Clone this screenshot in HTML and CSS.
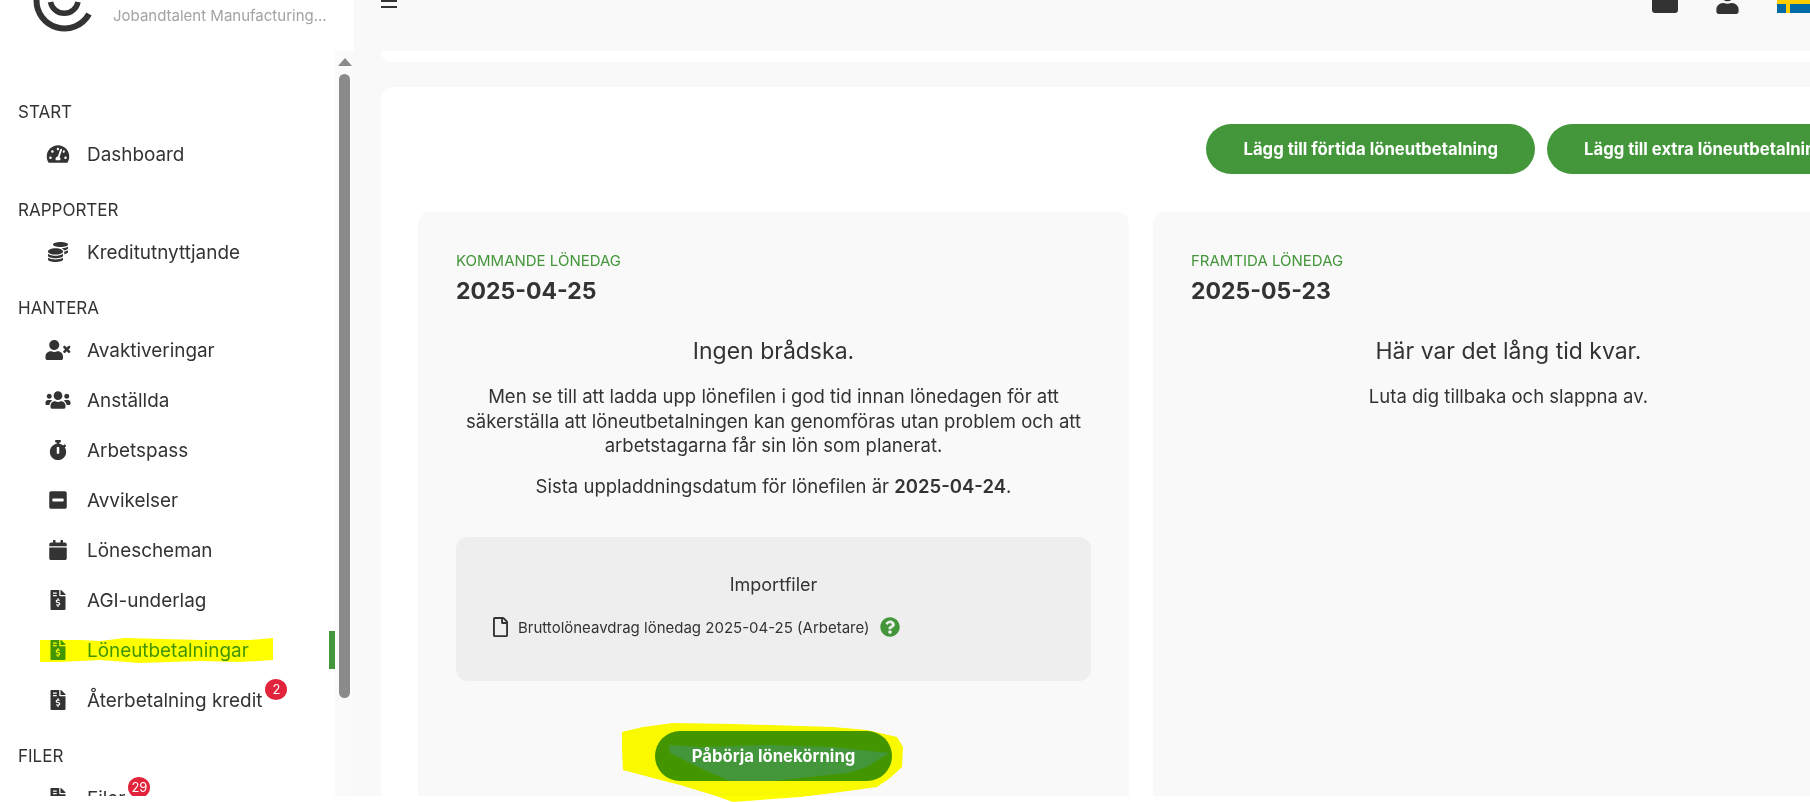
FILE: index.html
```html
<!DOCTYPE html>
<html lang="sv">
<head>
  <meta charset="UTF-8" />
  <meta name="viewport" content="width=device-width, initial-scale=1.0"/>
  <title>Löneutbetalningar</title>
  <link rel="stylesheet" href="styles.css">
</head>
<body>

  <svg class="sprite" xmlns="http://www.w3.org/2000/svg">
    <symbol id="i-gauge" viewBox="0 0 576 512"><path d="M288 32C128.94 32 0 160.94 0 320c0 52.8 14.25 102.26 39.06 144.8 5.61 9.62 16.3 15.2 27.44 15.2h443c11.14 0 21.83-5.58 27.44-15.2C561.75 422.26 576 372.8 576 320c0-159.06-128.94-288-288-288zm0 64c14.71 0 26.58 10.13 30.32 23.65-1.11 2.26-2.64 4.23-3.45 6.67l-9.22 27.67c-5.13 3.49-10.97 6.01-17.64 6.01-17.67 0-32-14.33-32-32S270.33 96 288 96zM96 384c-17.67 0-32-14.33-32-32s14.33-32 32-32 32 14.33 32 32-14.33 32-32 32zm48-160c-17.67 0-32-14.33-32-32s14.33-32 32-32 32 14.33 32 32-14.33 32-32 32zm246.77-72.41l-61.33 184C343.13 347.33 352 364.54 352 384c0 11.72-3.38 22.55-8.88 32H232.88c-5.5-9.45-8.88-20.28-8.88-32 0-33.94 26.5-61.43 59.9-63.59l61.34-184.01c4.17-12.56 17.73-19.45 30.36-15.17 12.57 4.19 19.35 17.77 15.17 30.36zm14.66 57.2l15.52-46.55c3.47-1.29 7.13-2.23 11.05-2.23 17.67 0 32 14.33 32 32s-14.33 32-32 32c-11.38-.01-20.89-6.28-26.57-15.22zM480 384c-17.67 0-32-14.33-32-32s14.33-32 32-32 32 14.33 32 32-14.33 32-32 32z"/></symbol>
    <symbol id="i-coins" viewBox="0 0 512 512"><path d="M0 405.3V448c0 35.3 86 64 192 64s192-28.7 192-64v-42.7C342.7 434.4 267.2 448 192 448S41.3 434.4 0 405.3zM320 128c106 0 192-28.7 192-64S426 0 320 0 128 28.7 128 64s86 64 192 64zM0 300.4V352c0 35.3 86 64 192 64s192-28.7 192-64v-51.6c-41.3 34-116.9 51.6-192 51.6S41.3 334.4 0 300.4zm416 11c57.3-11.1 96-31.7 96-55.4v-42.7c-23.2 16.4-57.3 27.6-96 34.5v63.6zM192 160C86 160 0 195.8 0 240s86 80 192 80 192-35.8 192-80-86-80-192-80zm219.3 56.3c60-10.8 100.7-32 100.7-56.3v-42.7c-35.5 25.1-96.5 38.6-160.7 41.8 29.5 14.3 51.2 33.5 60 57.2z"/></symbol>
    <symbol id="i-user-times" viewBox="0 0 640 512"><path d="M589.6 240l45.6-45.6c6.3-6.3 6.3-16.5 0-22.8l-22.8-22.8c-6.3-6.3-16.5-6.3-22.8 0L544 194.4l-45.6-45.6c-6.3-6.3-16.5-6.3-22.8 0l-22.8 22.8c-6.3 6.3-6.3 16.5 0 22.8l45.6 45.6-45.6 45.6c-6.3 6.3-6.3 16.5 0 22.8l22.8 22.8c6.3 6.3 16.5 6.3 22.8 0l45.6-45.6 45.6 45.6c6.3 6.3 16.5 6.3 22.8 0l22.8-22.8c6.3-6.3 6.3-16.5 0-22.8L589.6 240zM224 256c70.7 0 128-57.3 128-128S294.7 0 224 0 96 57.3 96 128s57.3 128 128 128zm89.6 32h-16.7c-22.2 10.2-46.9 16-72.9 16s-50.6-5.8-72.9-16h-16.7C60.2 288 0 348.2 0 422.4V464c0 26.5 21.5 48 48 48h352c26.5 0 48-21.5 48-48v-41.6c0-74.2-60.2-134.4-134.4-134.4z"/></symbol>
    <symbol id="i-users" viewBox="0 0 640 512"><path d="M96 224c35.3 0 64-28.7 64-64s-28.7-64-64-64-64 28.7-64 64 28.7 64 64 64zm448 0c35.3 0 64-28.7 64-64s-28.7-64-64-64-64 28.7-64 64 28.7 64 64 64zm32 32h-64c-17.6 0-33.5 7.1-45.1 18.6 40.3 22.1 68.9 62 75.1 109.4h66c17.7 0 32-14.3 32-32v-32c0-35.3-28.7-64-64-64zm-256 0c61.9 0 112-50.1 112-112S381.9 32 320 32 208 82.1 208 144s50.1 112 112 112zm76.8 32h-8.3c-20.8 10-43.9 16-68.5 16s-47.6-6-68.5-16h-8.3C179.6 288 128 339.6 128 403.2V432c0 26.5 21.5 48 48 48h288c26.5 0 48-21.5 48-48v-28.8c0-63.6-51.6-115.2-115.2-115.2zm-223.7-13.4C161.5 263.1 145.6 256 128 256H64c-35.3 0-64 28.7-64 64v32c0 17.7 14.3 32 32 32h65.9c6.3-47.4 34.9-87.3 75.2-109.4z"/></symbol>
    <symbol id="i-stopwatch" viewBox="0 0 448 512"><path d="M432 304c0 114.9-93.1 208-208 208S16 418.9 16 304c0-104 76.3-190.2 176-205.5V64h-28c-6.6 0-12-5.4-12-12V12c0-6.6 5.4-12 12-12h120c6.6 0 12 5.4 12 12v40c0 6.6-5.4 12-12 12h-28v34.5c37.5 5.8 71.7 21.6 99.7 44.6l27.5-27.5c4.7-4.7 12.3-4.7 17 0l28.3 28.3c4.7 4.7 4.7 12.3 0 17l-29.4 29.4-.6.6C419.7 223.3 432 262.2 432 304zm-176 36V188.5c0-6.6-5.4-12-12-12h-40c-6.6 0-12 5.4-12 12V340c0 6.6 5.4 12 12 12h40c6.6 0 12-5.4 12-12z"/></symbol>
    <symbol id="i-minus" viewBox="0 0 448 512"><path d="M400 32H48C21.5 32 0 53.5 0 80v352c0 26.5 21.5 48 48 48h352c26.5 0 48-21.5 48-48V80c0-26.5-21.5-48-48-48zM92 296c-6.6 0-12-5.4-12-12v-56c0-6.6 5.4-12 12-12h264c6.6 0 12 5.4 12 12v56c0 6.6-5.4 12-12 12H92z"/></symbol>
    <symbol id="i-calendar" viewBox="0 0 448 512"><path d="M12 192h424c6.6 0 12 5.4 12 12v260c0 26.5-21.5 48-48 48H48c-26.5 0-48-21.5-48-48V204c0-6.6 5.4-12 12-12zm436-44v-36c0-26.5-21.5-48-48-48h-48V12c0-6.6-5.4-12-12-12h-40c-6.6 0-12 5.4-12 12v52H160V12c0-6.6-5.4-12-12-12h-40c-6.6 0-12 5.4-12 12v52H48C21.5 64 0 85.5 0 112v36c0 6.6 5.4 12 12 12h424c6.6 0 12-5.4 12-12z"/></symbol>
    <symbol id="i-invoice" viewBox="0 0 384 512"><path d="M377 105L279.1 7c-4.5-4.5-10.6-7-17-7H256v128h128v-6.1c0-6.3-2.5-12.4-7-16.9zm-153 31V0H24C10.7 0 0 10.7 0 24v464c0 13.3 10.7 24 24 24h336c13.3 0 24-10.7 24-24V160H248c-13.2 0-24-10.8-24-24zM64 72c0-4.42 3.58-8 8-8h80c4.42 0 8 3.58 8 8v16c0 4.42-3.58 8-8 8H72c-4.42 0-8-3.58-8-8V72zm0 64c0-4.42 3.58-8 8-8h80c4.42 0 8 3.58 8 8v16c0 4.42-3.58 8-8 8H72c-4.42 0-8-3.58-8-8v-16zm144 263.88V424c0 4.42-3.58 8-8 8h-16c-4.42 0-8-3.58-8-8v-24.29c-11.29-.58-22.27-4.52-31.37-11.35-3.9-2.93-4.1-8.77-.57-12.14l11.75-11.21c2.77-2.64 6.89-2.76 10.13-.73 3.87 2.42 8.26 3.72 12.82 3.72h28.11c6.5 0 11.8-5.92 11.8-13.19 0-5.95-3.61-11.19-8.77-12.73l-45-13.5c-18.59-5.58-31.58-23.42-31.58-43.39 0-24.52 19.05-44.44 42.67-45.07V216c0-4.42 3.58-8 8-8h16c4.42 0 8 3.58 8 8v24.29c11.29.58 22.27 4.51 31.37 11.35 3.9 2.93 4.1 8.77.57 12.14l-11.75 11.21c-2.77 2.64-6.89 2.76-10.13.73-3.87-2.43-8.26-3.72-12.82-3.72h-28.11c-6.5 0-11.8 5.92-11.8 13.19 0 5.95 3.61 11.19 8.77 12.73l45 13.5c18.59 5.58 31.58 23.42 31.58 43.39 0 24.53-19.05 44.44-42.67 45.07z"/></symbol>
  </svg>

  <div class="app">

    <aside class="sidebar">
      <div class="brand">
        <svg class="brand-logo" viewBox="0 0 64 36" width="64" height="36">
          <path d="M3.5 0 A28 28 0 0 0 56 14" fill="none" stroke="#333" stroke-width="6"/>
          <path d="M17.5 2 A14 14 0 0 0 45 2" fill="none" stroke="#333" stroke-width="5.5"/>
        </svg>
        <span class="brand-name">Jobandtalent Manufacturing...</span>
      </div>

      <div class="sidebar-body">
        <nav class="nav">
          <div class="nav-label">START</div>
          <a class="nav-item"><svg class="nav-icon"><use href="#i-gauge"/></svg>Dashboard</a>

          <div class="nav-label">RAPPORTER</div>
          <a class="nav-item"><svg class="nav-icon"><use href="#i-coins"/></svg>Kreditutnyttjande</a>

          <div class="nav-label">HANTERA</div>
          <a class="nav-item"><svg class="nav-icon"><use href="#i-user-times"/></svg>Avaktiveringar</a>
          <a class="nav-item"><svg class="nav-icon"><use href="#i-users"/></svg>Anställda</a>
          <a class="nav-item"><svg class="nav-icon"><use href="#i-stopwatch"/></svg>Arbetspass</a>
          <a class="nav-item"><svg class="nav-icon"><use href="#i-minus"/></svg>Avvikelser</a>
          <a class="nav-item"><svg class="nav-icon"><use href="#i-calendar"/></svg>Lönescheman</a>
          <a class="nav-item"><svg class="nav-icon"><use href="#i-invoice"/></svg>AGI-underlag</a>
          <a class="nav-item active"><svg class="nav-icon"><use href="#i-invoice"/></svg>Löneutbetalningar</a>
          <a class="nav-item"><svg class="nav-icon"><use href="#i-invoice"/></svg><span class="badged">Återbetalning kredit<span class="badge">2</span></span></a>

          <div class="nav-label">FILER</div>
          <a class="nav-item"><svg class="nav-icon"><use href="#i-invoice"/></svg><span class="badged">Filer<span class="badge">29</span></span></a>
        </nav>

        <div class="scrollbar">
          <div class="scroll-arrow"></div>
          <div class="scroll-thumb"></div>
        </div>
      </div>
    </aside>

    <main class="main">
      <header class="topbar">
        <div class="hamburger"><span></span><span></span></div>
        <div class="top-icons">
          <svg class="top-calendar" viewBox="0 290 448 222"><use href="#i-calendar" width="448" height="512"/></svg>
          <svg class="top-user" viewBox="0 230 448 282">
            <path fill="#333" d="M224 256c70.7 0 128-57.3 128-128S294.7 0 224 0 96 57.3 96 128s57.3 128 128 128zm89.6 32h-16.7c-22.2 10.2-46.9 16-72.9 16s-50.6-5.8-72.9-16h-16.7C60.2 288 0 348.2 0 422.4V464c0 26.5 21.5 48 48 48h352c26.5 0 48-21.5 48-48v-41.6c0-74.2-60.2-134.4-134.4-134.4z"/>
          </svg>
          <svg class="top-flag" viewBox="0 0 33 13">
            <rect width="33" height="13" fill="#006aa7"/>
            <rect width="33" height="4" fill="#fecc00"/>
            <rect x="9" width="4" height="13" fill="#fecc00"/>
          </svg>
        </div>
      </header>

      <div class="band"></div>

      <section class="panel">
        <div class="actions">
          <button class="btn">Lägg till förtida löneutbetalning</button>
          <button class="btn">Lägg till extra löneutbetalning</button>
        </div>

        <div class="paydays">
          <article class="payday">
            <div class="payday-label">KOMMANDE LÖNEDAG</div>
            <div class="payday-date">2025-04-25</div>
            <h3 class="payday-title">Ingen brådska.</h3>
            <p class="payday-text">Men se till att ladda upp lönefilen i god tid innan lönedagen för att säkerställa att löneutbetalningen kan genomföras utan problem och att arbetstagarna får sin lön som planerat.</p>
            <p class="payday-text payday-last">Sista uppladdningsdatum för lönefilen är <strong>2025-04-24</strong>.</p>

            <div class="imports">
              <div class="imports-title">Importfiler</div>
              <div class="import-row">
                <svg class="import-file" viewBox="0 0 384 512"><path d="M369.9 97.9L286 14C277 5 264.8-.1 252.1-.1H48C21.5 0 0 21.5 0 48v416c0 26.5 21.5 48 48 48h288c26.5 0 48-21.5 48-48V131.9c0-12.7-5.1-25-14.1-34zM332.1 128H256V51.9l76.1 76.1zM48 464V48h160v104c0 13.3 10.7 24 24 24h104v288H48z"/></svg>
                <span>Bruttolöneavdrag lönedag 2025-04-25 (Arbetare)</span>
                <svg class="import-help" viewBox="0 0 512 512"><path d="M504 256c0 136.997-111.043 248-248 248S8 392.997 8 256C8 119.083 119.043 8 256 8s248 111.083 248 248zM262.655 90c-54.497 0-89.255 22.957-116.549 63.758-3.536 5.286-2.353 12.415 2.715 16.258l34.699 26.31c5.205 3.947 12.621 3.008 16.665-2.122 17.864-22.658 30.113-35.797 57.303-35.797 20.429 0 45.698 13.148 45.698 32.958 0 14.976-12.363 22.667-32.534 33.976C247.128 238.528 216 254.941 216 296v4c0 6.627 5.373 12 12 12h56c6.627 0 12-5.373 12-12v-1.333c0-28.462 83.186-29.647 83.186-106.667 0-58.002-60.165-102-116.531-102zM256 338c-25.365 0-46 20.635-46 46 0 25.364 20.635 46 46 46s46-20.636 46-46c0-25.365-20.635-46-46-46z"/></svg>
              </div>
            </div>

            <div class="start-row"><button class="btn">Påbörja lönekörning</button></div>
          </article>

          <article class="payday">
            <div class="payday-label">FRAMTIDA LÖNEDAG</div>
            <div class="payday-date">2025-05-23</div>
            <h3 class="payday-title">Här var det lång tid kvar.</h3>
            <p class="payday-text">Luta dig tillbaka och slappna av.</p>
          </article>
        </div>
      </section>
    </main>
  </div>

  <!-- marker strokes someone painted on top of the screenshot -->
  <svg class="marker" viewBox="0 0 1810 802" width="1810" height="802">
    <polygon points="40,640 80,640 100,641 125,638 200,640 250,640 273,638 273,660 240,662 200,661 140,663 100,660 60,662 40,662"/>
    <path fill-rule="evenodd" d="M622 732 643 727 673 723 733 724 800 726 833 727 867 730 897 737 903 747 902 767 890 778 877 787 833 793 800 797 760 800 733 802 713 795 680 785 653 778 623 770 622 750Z M669 745 700 747 767 745 833 747 889 753 867 767 847 773 800 778 773 781 730 781 700 768 670 753Z"/>
  </svg>

</body>
</html>
```

FILE: styles.css
```css
body {
  margin: 0;
  width: 1810px;
  height: 802px;
  overflow: hidden;
  position: relative;
  background-color: #fff;
  color: #333;
  font-family: Inter, 'Noto Sans', sans-serif;
}

.sprite {
  display: none;
}

.app {
  display: flex;
  height: 796px;
  overflow: hidden;
}

/* sidebar */
.sidebar {
  flex: 0 0 354px;
  display: flex;
  flex-direction: column;
}

.brand {
  display: flex;
  height: 51px;
  flex: none;
  padding-left: 33px;
}

.brand-logo {
  flex: none;
}

.brand-name {
  margin: 5px 0 0 16px;
  font-size: 15px;
  line-height: 22px;
  color: #a3a3a3;
}

.sidebar-body {
  flex: 1;
  display: flex;
  min-height: 0;
}

.nav {
  flex: 1;
  padding-top: 42px;
  overflow: hidden;
}

.nav-label {
  height: 36px;
  line-height: 38px;
  padding-left: 18px;
  font-size: 17px;
}

.nav-item {
  position: relative;
  display: flex;
  align-items: center;
  height: 50px;
  margin-bottom: 12px;
  padding-left: 45px;
  font-size: 18.9px;
}

.nav-item:has(+ .nav-item) {
  margin-bottom: 0;
}

.nav-icon {
  flex: none;
  width: 26px;
  height: 20px;
  margin-right: 16px;
  fill: #333;
}

.nav-item.active {
  color: #43963a;
}

.nav-item.active .nav-icon {
  fill: #43963a;
}

.nav-item.active::after {
  content: "";
  position: absolute;
  right: 0;
  top: 6px;
  width: 6px;
  height: 38px;
  background: #43963a;
}

.badged {
  position: relative;
}

.badge {
  position: absolute;
  left: 100%;
  top: -10px;
  margin-left: 3px;
  width: 22px;
  height: 21px;
  border-radius: 50%;
  background: #e2233c;
  color: #fff;
  font-size: 13px;
  line-height: 21px;
  text-align: center;
}

.scrollbar {
  flex: 0 0 19px;
  background: #fafafa;
}

.scroll-arrow {
  width: 0;
  margin: 7px auto 0;
  border: 7px solid transparent;
  border-top: 0;
  border-bottom: 8px solid #8a8a8a;
}

.scroll-thumb {
  width: 11px;
  height: 624px;
  margin: 8px auto 0;
  border-radius: 6px;
  background: #8a8a8a;
}

/* main column */
.main {
  flex: 1;
  min-width: 0;
  overflow: hidden;
  background: #f9f9f9;
}

.topbar {
  display: flex;
  justify-content: space-between;
  height: 51px;
  padding-left: 27px;
}

.hamburger span {
  display: block;
  width: 16px;
  height: 2px;
  margin-bottom: 4px;
  background: #333;
}

.top-icons {
  display: flex;
  align-items: flex-start;
}

.top-calendar {
  width: 26px;
  height: 13px;
  fill: #333;
}

.top-user {
  width: 23px;
  height: 14px;
  margin-left: 38px;
}

.top-flag {
  width: 33px;
  height: 13px;
  margin-left: 38px;
}

.band {
  height: 11px;
  margin-left: 27px;
  margin-bottom: 25px;
  border-radius: 0 0 0 10px;
  background: #fff;
}

.panel {
  width: 1514px;
  margin-left: 27px;
  padding: 37px 32px 0 37px;
  box-sizing: border-box;
  height: 720px;
  border-radius: 12px 0 0 0;
  background: #fff;
}

.actions {
  display: flex;
  justify-content: flex-end;
  gap: 12px;
  margin-bottom: 38px;
}

.btn {
  height: 50px;
  padding: 0 37px;
  border: 0;
  border-radius: 25px;
  background: #43963a;
  color: #fff;
  font-family: inherit;
  font-size: 16.7px;
  font-weight: 700;
}

.paydays {
  display: grid;
  grid-template-columns: 711px 711px;
  gap: 24px;
}

.payday {
  height: 600px;
  padding: 39px 38px 0;
  box-sizing: border-box;
  border-radius: 12px;
  background: #f9f9f9;
}

.payday-label {
  height: 20px;
  line-height: 20px;
  font-size: 15px;
  color: #43963a;
}

.payday-date {
  margin-top: 3px;
  height: 34px;
  line-height: 34px;
  font-size: 23px;
  font-weight: 700;
}

.payday-title {
  margin: 27px 0 17px;
  font-size: 23px;
  font-weight: 400;
  line-height: 32px;
  text-align: center;
}

.payday-text {
  margin: 0 0 16px;
  font-size: 18.5px;
  line-height: 24.5px;
  text-align: center;
}

.payday-text strong {
  font-weight: 600;
}

.payday-last {
  margin-bottom: 39px;
}

.imports {
  height: 144px;
  padding-top: 36px;
  box-sizing: border-box;
  border-radius: 12px;
  background: #eee;
}

.imports-title {
  height: 24px;
  line-height: 24px;
  font-size: 18px;
  text-align: center;
}

.import-row {
  display: flex;
  align-items: center;
  height: 24px;
  margin-top: 18px;
  padding-left: 37px;
  font-size: 15px;
}

.import-file {
  width: 15px;
  height: 20px;
  margin-right: 10px;
  fill: #333;
}

.import-help {
  width: 20px;
  height: 20px;
  margin-left: 10px;
  fill: #43963a;
}

.start-row {
  margin-top: 50px;
  text-align: center;
}

/* yellow marker overlay */
.marker {
  position: absolute;
  left: 0;
  top: 0;
  fill: #ff0;
  mix-blend-mode: multiply;
  pointer-events: none;
}
```
